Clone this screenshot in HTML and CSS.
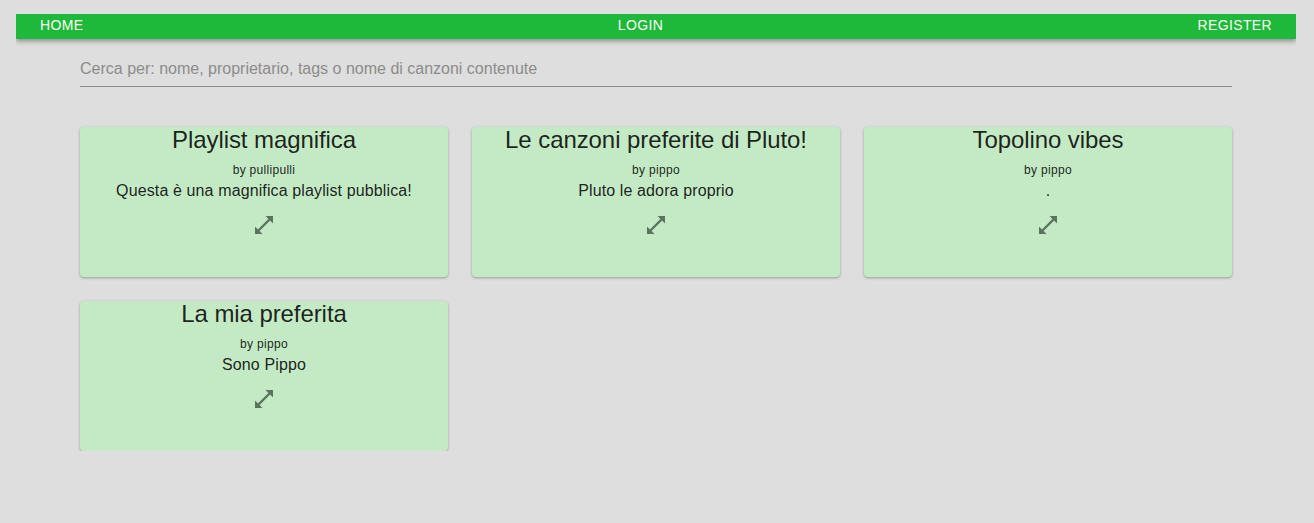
FILE: index.html
```html
<!DOCTYPE html>
<html lang="it">
<head>
<meta charset="utf-8">
<title>Playlist</title>
<link rel="stylesheet" href="styles.css">
</head>
<body>
<nav class="navbar">
  <a class="nav-link" href="#">HOME</a>
  <a class="nav-link" href="#">LOGIN</a>
  <a class="nav-link" href="#">REGISTER</a>
</nav>
<main class="main">
  <input class="search" type="text" placeholder="Cerca per: nome, proprietario, tags o nome di canzoni contenute">
  <section class="grid">
    <article class="card">
      <h2 class="card-title">Playlist magnifica</h2>
      <p class="card-owner">by pullipulli</p>
      <p class="card-desc">Questa è una magnifica playlist pubblica!</p>
      <svg class="card-icon" viewBox="0 0 20 20" width="20" height="20"><polygon points="11.5,1 19,1 19,8.5"/><polygon points="1,11.5 1,19 8.5,19"/><line x1="4" y1="16" x2="16" y2="4"/></svg>
    </article>
    <article class="card">
      <h2 class="card-title">Le canzoni preferite di Pluto!</h2>
      <p class="card-owner">by pippo</p>
      <p class="card-desc">Pluto le adora proprio</p>
      <svg class="card-icon" viewBox="0 0 20 20" width="20" height="20"><polygon points="11.5,1 19,1 19,8.5"/><polygon points="1,11.5 1,19 8.5,19"/><line x1="4" y1="16" x2="16" y2="4"/></svg>
    </article>
    <article class="card">
      <h2 class="card-title">Topolino vibes</h2>
      <p class="card-owner">by pippo</p>
      <p class="card-desc">.</p>
      <svg class="card-icon" viewBox="0 0 20 20" width="20" height="20"><polygon points="11.5,1 19,1 19,8.5"/><polygon points="1,11.5 1,19 8.5,19"/><line x1="4" y1="16" x2="16" y2="4"/></svg>
    </article>
    <article class="card">
      <h2 class="card-title">La mia preferita</h2>
      <p class="card-owner">by pippo</p>
      <p class="card-desc">Sono Pippo</p>
      <svg class="card-icon" viewBox="0 0 20 20" width="20" height="20"><polygon points="11.5,1 19,1 19,8.5"/><polygon points="1,11.5 1,19 8.5,19"/><line x1="4" y1="16" x2="16" y2="4"/></svg>
    </article>
  </section>
</main>
</body>
</html>
```
FILE: styles.css
```css
html, body {
  background: #dedede;
}
body {
  margin: 14px 18px 0 16px;
  font-family: "Liberation Sans", Arial, sans-serif;
  color: rgba(0, 0, 0, 0.87);
}
.navbar {
  display: flex;
  justify-content: space-between;
  align-items: center;
  height: 25px;
  padding: 0 24px 2px;
  box-sizing: border-box;
  background: #1eb83a;
  box-shadow: 0 2px 4px rgba(0, 0, 0, 0.25), 0 3px 6px rgba(0, 0, 0, 0.12);
}
.nav-link {
  color: #fbfff4;
  text-decoration: none;
  font-size: 14px;
  line-height: 23px;
  letter-spacing: 0.35px;
}
.main {
  padding: 0 64px;
}
.search {
  display: block;
  width: 100%;
  box-sizing: border-box;
  height: 30px;
  margin: 18px 0 0;
  padding: 0 0 5px;
  border: none;
  border-bottom: 1px solid #8a8a8a;
  background: transparent;
  font-family: "Liberation Sans", Arial, sans-serif;
  font-size: 16px;
  color: #333;
  outline: none;
}
.search::placeholder {
  color: #8c8c8c;
}
.grid {
  display: grid;
  grid-template-columns: repeat(3, 1fr);
  grid-auto-rows: 150px;
  gap: 24px;
  margin-top: 40px;
}
.card {
  display: flex;
  flex-direction: column;
  align-items: center;
  background: #c4eac5;
  border-radius: 4px;
  box-shadow: 0 1px 3px rgba(0, 0, 0, 0.3);
  text-align: center;
}
.card-title {
  margin: 0;
  font-size: 24px;
  font-weight: normal;
  line-height: 26px;
  letter-spacing: -0.08px;
}
.card-owner {
  margin: 10px 0 0;
  font-size: 12px;
  line-height: 14px;
  letter-spacing: 0.3px;
}
.card-desc {
  margin: 4px 0 0;
  font-size: 16px;
  line-height: 19px;
  letter-spacing: 0.12px;
}
.card-icon {
  margin-top: 15px;
  fill: #5b7460;
  stroke: #5b7460;
}
.card-icon line {
  stroke-width: 2.4;
}
.card-icon polygon {
  stroke: none;
}
```
